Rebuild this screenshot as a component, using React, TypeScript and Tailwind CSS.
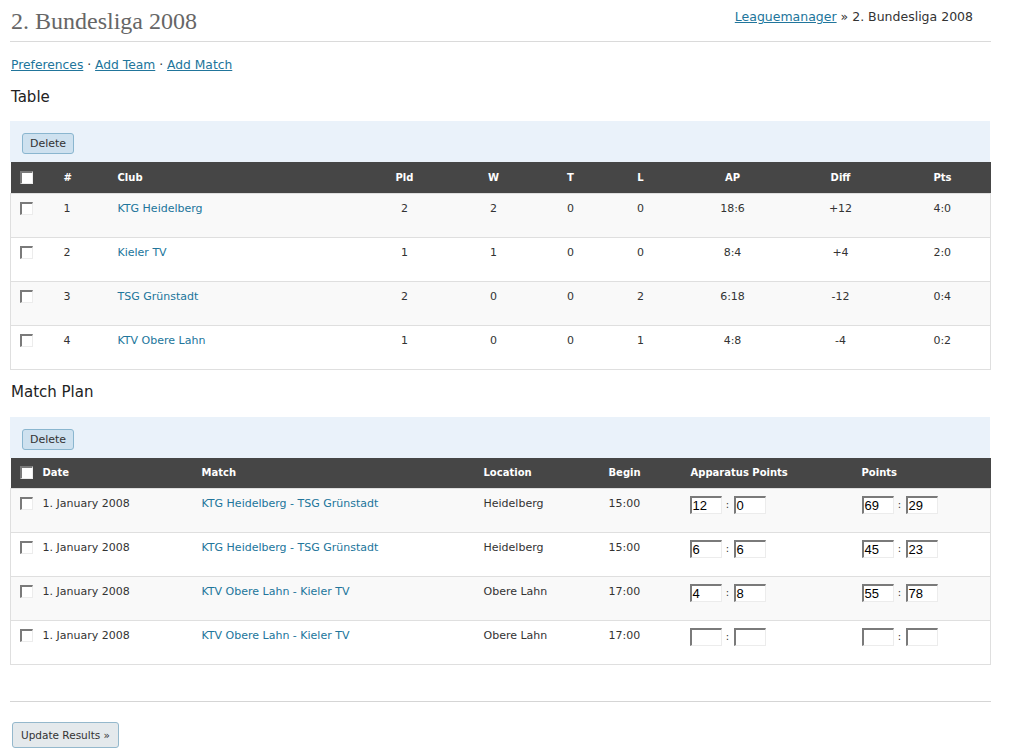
import React from "react";

const font = { fontFamily: '"DejaVu Sans", Verdana, sans-serif' };

function Check() {
  return (
    <span className="block w-[13px] h-[13px] bg-white border-t-2 border-l-2 border-r border-b border-t-[#7a7a7a] border-l-[#7a7a7a] border-r-[#ececec] border-b-[#ececec]" />
  );
}

function Field({ v }: { v: string }) {
  return (
    <span
      className="block w-[32px] h-[18px] bg-white border-t-2 border-l-2 border-r border-b border-t-[#7a7a7a] border-l-[#7a7a7a] border-r-[#ececec] border-b-[#ececec] pl-[1px] text-[13px] leading-[15px] text-black"
      style={{ fontFamily: '"Liberation Sans", Arial, sans-serif' }}
    >
      {v}
    </span>
  );
}

function Pair({ a, b }: { a: string; b: string }) {
  return (
    <div className="flex items-center">
      <Field v={a} />
      <span className="w-[12px] text-center text-[10px] leading-[12px]">:</span>
      <Field v={b} />
    </div>
  );
}

function DeleteBar() {
  return (
    <div className="h-[41px] bg-[#eaf2fa] pt-[9px] pl-[12px]">
      <button className="h-[21px] px-[7px] bg-[#cee1ef] border border-[#8ab6cf] rounded-[3px] text-[11px] leading-[19px] text-[#333]">
        Delete
      </button>
    </div>
  );
}

const standings = [
  ["1", "KTG Heidelberg", "2", "2", "0", "0", "18:6", "+12", "4:0"],
  ["2", "Kieler TV", "1", "1", "0", "0", "8:4", "+4", "2:0"],
  ["3", "TSG Grünstadt", "2", "0", "0", "2", "6:18", "-12", "0:4"],
  ["4", "KTV Obere Lahn", "1", "0", "0", "1", "4:8", "-4", "0:2"],
];

const matches = [
  ["1. January 2008", "KTG Heidelberg - TSG Grünstadt", "Heidelberg", "15:00", "12", "0", "69", "29"],
  ["1. January 2008", "KTG Heidelberg - TSG Grünstadt", "Heidelberg", "15:00", "6", "6", "45", "23"],
  ["1. January 2008", "KTV Obere Lahn - Kieler TV", "Obere Lahn", "17:00", "4", "8", "55", "78"],
  ["1. January 2008", "KTV Obere Lahn - Kieler TV", "Obere Lahn", "17:00", "", "", "", ""],
];

export default function App() {
  return (
    <div className="bg-white w-[1020px] h-[754px] text-[#333]" style={font}>
      <div className="ml-[10px] w-[981px]">
        <div className="h-[42px] border-b border-[#dadada] flex justify-between">
          <h2
            className="pt-[7px] pl-[1px] text-[24px] leading-[28px] text-[#666]"
            style={{ fontFamily: '"Liberation Serif", Georgia, serif' }}
          >
            2. Bundesliga 2008
          </h2>
          <div className="pt-[8px] pr-[18px] text-[12.5px] leading-[18px] text-[#333]">
            <a className="text-[#21759b] underline">Leaguemanager</a> » 2. Bundesliga 2008
          </div>
        </div>
      </div>

      <div className="ml-[11px] mt-[15px] text-[12.3px] leading-[16px] text-[#333]">
        <a className="text-[#21759b] underline">Preferences</a> · <a className="text-[#21759b] underline">Add Team</a> ·{" "}
        <a className="text-[#21759b] underline">Add Match</a>
      </div>

      <h3 className="ml-[11px] mt-[14px] text-[15px] leading-[20px] text-[#222]">Table</h3>

      <div className="ml-[10px] w-[980px] mt-[14px]">
        <DeleteBar />
        <table className="w-[980px] table-fixed border-collapse text-[11px] leading-[13px]">
          <colgroup>
            <col className="w-[46px]" />
            <col className="w-[54px]" />
            <col className="w-[250px]" />
            <col className="w-[88px]" />
            <col className="w-[90px]" />
            <col className="w-[64px]" />
            <col className="w-[76px]" />
            <col className="w-[108px]" />
            <col className="w-[108px]" />
            <col className="w-[96px]" />
          </colgroup>
          <thead>
            <tr className="h-[31px] bg-[#464646] text-white text-[10px] font-bold">
              <th className="pl-[9px] align-middle"><Check /></th>
              <th className="pl-[7px] text-left font-bold">#</th>
              <th className="pl-[7px] text-left font-bold">Club</th>
              <th className="text-center font-bold">Pld</th>
              <th className="text-center font-bold">W</th>
              <th className="text-center font-bold">T</th>
              <th className="text-center font-bold">L</th>
              <th className="text-center font-bold">AP</th>
              <th className="text-center font-bold">Diff</th>
              <th className="text-center font-bold">Pts</th>
            </tr>
          </thead>
          <tbody>
            {standings.map((r, i) => (
              <tr
                key={i}
                className={`h-[44px] border border-[#dfdfdf] ${i % 2 === 0 ? "bg-[#f9f9f9]" : "bg-white"}`}
              >
                <td className="pl-[9px] pt-[8px] align-top"><Check /></td>
                <td className="pl-[7px] pt-[8px] align-top">{r[0]}</td>
                <td className="pl-[7px] pt-[8px] align-top text-[#21759b]">{r[1]}</td>
                {r.slice(2).map((c, j) => (
                  <td key={j} className="pt-[8px] align-top text-center">{c}</td>
                ))}
              </tr>
            ))}
          </tbody>
        </table>
      </div>

      <h3 className="ml-[11px] mt-[12px] text-[15px] leading-[20px] text-[#222]">Match Plan</h3>

      <div className="ml-[10px] w-[980px] mt-[15px]">
        <DeleteBar />
        <table className="w-[980px] table-fixed border-collapse text-[11px] leading-[13px]">
          <colgroup>
            <col className="w-[25px]" />
            <col className="w-[159px]" />
            <col className="w-[282px]" />
            <col className="w-[125px]" />
            <col className="w-[81px]" />
            <col className="w-[172px]" />
            <col className="w-[136px]" />
          </colgroup>
          <thead>
            <tr className="h-[31px] bg-[#464646] text-white text-[10px]">
              <th className="pl-[9px] align-middle"><Check /></th>
              <th className="pl-[7px] text-left font-bold">Date</th>
              <th className="pl-[7px] text-left font-bold">Match</th>
              <th className="pl-[7px] text-left font-bold">Location</th>
              <th className="pl-[7px] text-left font-bold">Begin</th>
              <th className="pl-[8px] text-left font-bold">Apparatus Points</th>
              <th className="pl-[7px] text-left font-bold">Points</th>
            </tr>
          </thead>
          <tbody>
            {matches.map((r, i) => (
              <tr
                key={i}
                className={`h-[44px] border border-[#dfdfdf] ${i % 2 === 0 ? "bg-[#f9f9f9]" : "bg-white"}`}
              >
                <td className="pl-[9px] pt-[8px] align-top"><Check /></td>
                <td className="pl-[7px] pt-[8px] align-top">{r[0]}</td>
                <td className="pl-[7px] pt-[8px] align-top text-[#21759b]">{r[1]}</td>
                <td className="pl-[7px] pt-[8px] align-top">{r[2]}</td>
                <td className="pl-[7px] pt-[8px] align-top">{r[3]}</td>
                <td className="pl-[7px] pt-[7px] align-top"><Pair a={r[4]} b={r[5]} /></td>
                <td className="pl-[7px] pt-[7px] align-top"><Pair a={r[6]} b={r[7]} /></td>
              </tr>
            ))}
          </tbody>
        </table>
      </div>

      <div className="ml-[10px] w-[981px] mt-[36px] border-t border-[#d5d5d5]" />

      <div className="ml-[12px] mt-[20px]">
        <button className="h-[26px] px-[8px] bg-[#e4e9ec] border border-[#94b8cc] rounded-[3px] text-[10.5px] leading-[24px] text-[#333]">
          Update Results »
        </button>
      </div>
    </div>
  );
}
